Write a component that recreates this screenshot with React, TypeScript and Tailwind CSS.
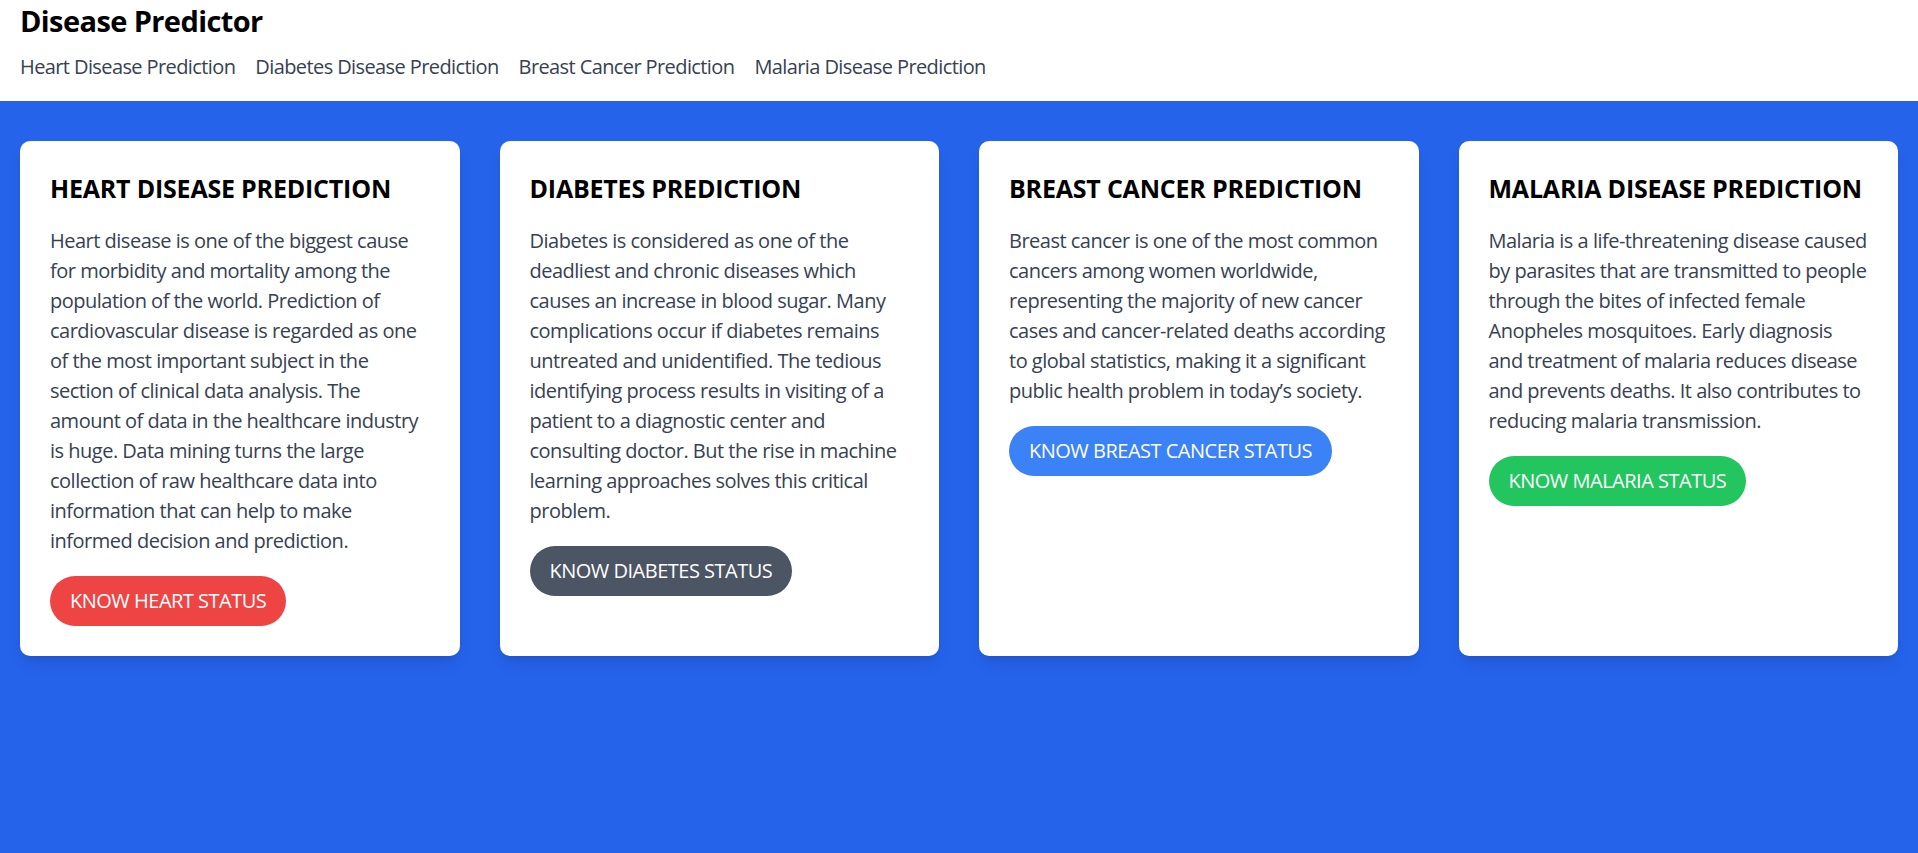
import React from "react";

type Card = {
  title: string;
  lines: string[];
  button: string;
  btnClass: string;
};

const cards: Card[] = [
  {
    title: "HEART DISEASE PREDICTION",
    lines: [
      "Heart disease is one of the biggest cause",
      "for morbidity and mortality among the",
      "population of the world. Prediction of",
      "cardiovascular disease is regarded as one",
      "of the most important subject in the",
      "section of clinical data analysis. The",
      "amount of data in the healthcare industry",
      "is huge. Data mining turns the large",
      "collection of raw healthcare data into",
      "information that can help to make",
      "informed decision and prediction.",
    ],
    button: "KNOW HEART STATUS",
    btnClass: "bg-[#ef4444]",
  },
  {
    title: "DIABETES PREDICTION",
    lines: [
      "Diabetes is considered as one of the",
      "deadliest and chronic diseases which",
      "causes an increase in blood sugar. Many",
      "complications occur if diabetes remains",
      "untreated and unidentified. The tedious",
      "identifying process results in visiting of a",
      "patient to a diagnostic center and",
      "consulting doctor. But the rise in machine",
      "learning approaches solves this critical",
      "problem.",
    ],
    button: "KNOW DIABETES STATUS",
    btnClass: "bg-[#4b5563]",
  },
  {
    title: "BREAST CANCER PREDICTION",
    lines: [
      "Breast cancer is one of the most common",
      "cancers among women worldwide,",
      "representing the majority of new cancer",
      "cases and cancer-related deaths according",
      "to global statistics, making it a significant",
      "public health problem in today\u2019s society.",
    ],
    button: "KNOW BREAST CANCER STATUS",
    btnClass: "bg-[#3b82f6]",
  },
  {
    title: "MALARIA DISEASE PREDICTION",
    lines: [
      "Malaria is a life-threatening disease caused",
      "by parasites that are transmitted to people",
      "through the bites of infected female",
      "Anopheles mosquitoes. Early diagnosis",
      "and treatment of malaria reduces disease",
      "and prevents deaths. It also contributes to",
      "reducing malaria transmission.",
    ],
    button: "KNOW MALARIA STATUS",
    btnClass: "bg-[#22c55e]",
  },
];

const navItems = [
  "Heart Disease Prediction",
  "Diabetes Disease Prediction",
  "Breast Cancer Prediction",
  "Malaria Disease Prediction",
];

export default function App() {
  return (
    <div className="min-h-screen flex flex-col font-['Open_Sans','Noto_Sans',sans-serif]">
      <header className="bg-white px-5 pt-[1px] pb-[19px]">
        <h1 className="text-[29px] leading-[40px] font-bold text-black tracking-[-0.6px]">
          Disease Predictor
        </h1>
        <nav className="mt-[11px] flex gap-5 text-[20px] leading-[30px] text-[#374151] tracking-[-0.6px]">
          {navItems.map((n) => (
            <a key={n} href="#" className="whitespace-nowrap">
              {n}
            </a>
          ))}
        </nav>
      </header>
      <main className="flex-1 bg-[#2563eb] px-5 pt-10 pb-10">
        <div className="grid grid-cols-4 gap-10">
          {cards.map((c) => (
            <div
              key={c.title}
              className="bg-white rounded-[10px] p-[30px] shadow-lg"
            >
              <h2 className="text-[25px] leading-[35px] font-bold text-black tracking-[-0.2px] whitespace-nowrap">
                {c.title}
              </h2>
              <p className="mt-5 text-[20px] leading-[30px] text-[#374151] tracking-[-0.5px]">
                {c.lines.map((l, i) => (
                  <span key={i} className="block whitespace-nowrap">
                    {l}
                  </span>
                ))}
              </p>
              <button
                className={`mt-5 inline-block rounded-full px-5 py-[10px] text-[20px] leading-[30px] text-white tracking-[-0.5px] ${c.btnClass}`}
              >
                {c.button}
              </button>
            </div>
          ))}
        </div>
      </main>
    </div>
  );
}
